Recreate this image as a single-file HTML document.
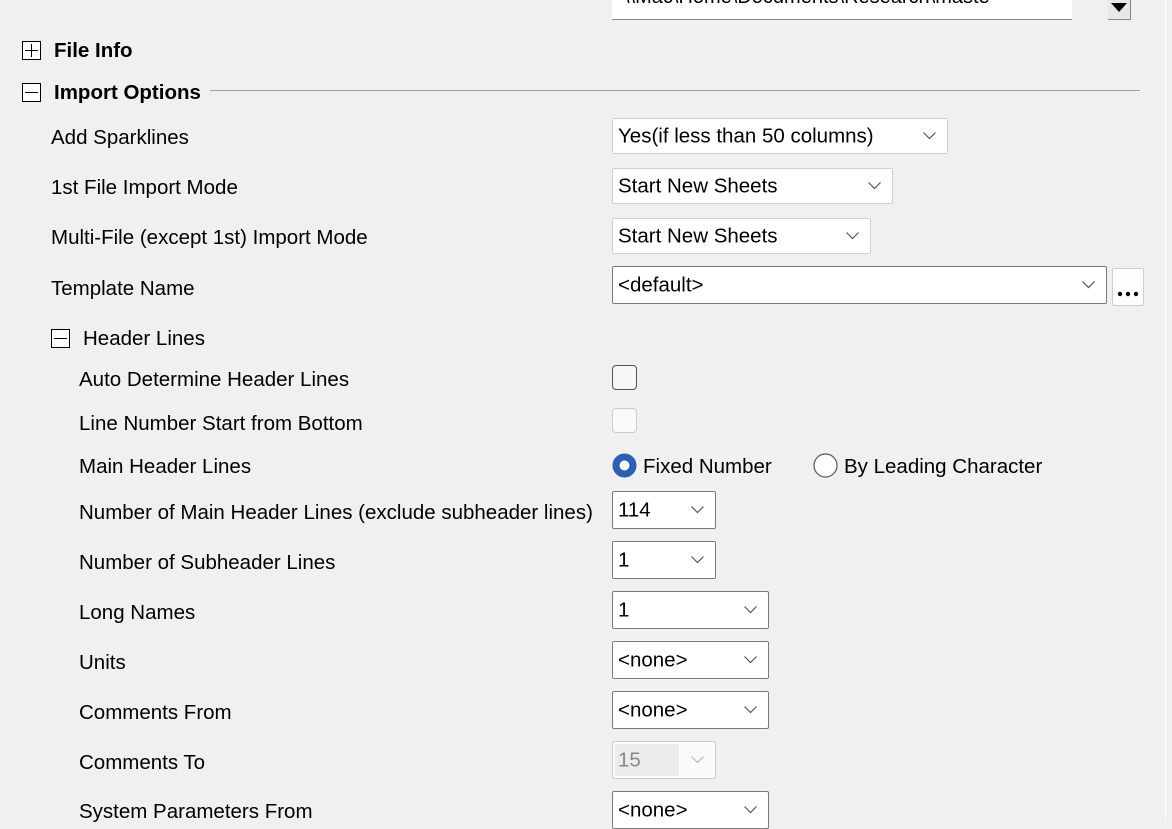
<!DOCTYPE html>
<html><head><meta charset="utf-8"><style>
body{margin:0;width:1172px;height:820px;background:#f0f0f0;overflow:hidden;position:relative;font-family:"Liberation Sans",sans-serif;font-size:20.5px;color:#000}
.l{position:absolute;line-height:24px;white-space:nowrap;margin-top:1px}
.b{font-weight:bold}
.box{position:absolute;background:#fff;border:1px solid #7a7a7a;border-radius:2px;box-sizing:border-box}
.box.lt{border-color:#cfcfcf}
.box span{position:absolute;left:5px;top:50%;transform:translateY(-48%);white-space:nowrap}
.box svg{position:absolute;right:10px;top:50%;margin-top:-4px}
.ico{position:absolute;width:19px;height:19px;border:1px solid #000;box-sizing:border-box;background:#fff}
.ico:before{content:"";position:absolute;left:2px;right:2px;top:8px;height:1px;background:#000}
.ico.p:after{content:"";position:absolute;top:2px;bottom:2px;left:8px;width:1px;background:#000}
.cb{position:absolute;width:25px;height:25px;border:1px solid #555;border-radius:4px;box-sizing:border-box;background:#f7f7f7}
</style></head><body>
<div style="position:absolute;left:612px;top:0;width:460px;height:19px;background:#fff;border-bottom:1px solid #8a8a8a;overflow:hidden"><span class="l" style="left:12px;top:-16px;font-size:20px">\\Mac\Home\Documents\Research\maste</span></div>
<div style="position:absolute;left:1108px;top:0;width:22px;height:19px;background:#e8e8e8;border-right:1px solid #888;border-bottom:1px solid #888"><svg width="22" height="19" style="position:absolute;left:0;top:0"><path d="M3 3h16l-8 9z" fill="#000"/></svg></div>
<div style="position:absolute;left:1165px;top:0;width:1px;height:820px;background:#fff"></div>

<div class="ico p" style="left:22px;top:41px"></div><div class="l b" style="left:54px;top:38px;font-size:20.5px">File Info</div>
<div class="ico" style="left:22px;top:83px"></div><div class="l b" style="left:54px;top:80px;font-size:20.5px">Import Options</div>
<div style="position:absolute;left:210px;top:90px;width:930px;height:1px;background:#a0a0a0"></div>

<div class="l" style="left:51px;top:125px">Add Sparklines</div>
<div class="l" style="left:51px;top:175px">1st File Import Mode</div>
<div class="l" style="left:51px;top:225px">Multi-File (except 1st) Import Mode</div>
<div class="l" style="left:51px;top:276px">Template Name</div>
<div class="ico" style="left:51px;top:329px"></div><div class="l" style="left:83px;top:326px">Header Lines</div>
<div class="l" style="left:79px;top:367px">Auto Determine Header Lines</div>
<div class="l" style="left:79px;top:411px">Line Number Start from Bottom</div>
<div class="l" style="left:79px;top:454px">Main Header Lines</div>
<div class="l" style="left:79px;top:500px">Number of Main Header Lines (exclude subheader lines)</div>
<div class="l" style="left:79px;top:550px">Number of Subheader Lines</div>
<div class="l" style="left:79px;top:600px">Long Names</div>
<div class="l" style="left:79px;top:650px">Units</div>
<div class="l" style="left:79px;top:700px">Comments From</div>
<div class="l" style="left:79px;top:750px">Comments To</div>
<div class="l" style="left:79px;top:799px">System Parameters From</div>

<svg width="0" height="0" style="position:absolute"><defs><path id="ch" d="M0.5 0.5l6 6 6-6" fill="none" stroke="#555" stroke-width="1.2"/></defs></svg>
<div class="box lt" style="left:612px;top:118px;width:336px;height:36px"><span>Yes(if less than 50 columns)</span><svg width="14" height="8"><use href="#ch"/></svg></div>
<div class="box lt" style="left:612px;top:168px;width:281px;height:36px"><span>Start New Sheets</span><svg width="14" height="8"><use href="#ch"/></svg></div>
<div class="box lt" style="left:612px;top:218px;width:259px;height:36px"><span>Start New Sheets</span><svg width="14" height="8"><use href="#ch"/></svg></div>
<div class="box" style="left:612px;top:266px;width:495px;height:38px"><span>&lt;default&gt;</span><svg width="14" height="8"><use href="#ch"/></svg></div>
<div class="box lt" style="left:1112px;top:268px;width:32px;height:38px;background:#fdfdfd"><svg width="22" height="6" style="right:4px;margin-top:4px"><circle cx="3" cy="3" r="2.2"/><circle cx="11" cy="3" r="2.2"/><circle cx="19" cy="3" r="2.2"/></svg></div>

<div class="cb" style="left:612px;top:365px"></div>
<div class="cb" style="left:612px;top:408px;border-color:#ccc;background:#f9f9f9"></div>

<svg style="position:absolute;left:612px;top:453px" width="25" height="25"><circle cx="12.5" cy="12.5" r="12" fill="#2a5fb5"/><circle cx="12.5" cy="12.5" r="5" fill="#fff"/></svg>
<div class="l" style="left:643px;top:454px">Fixed Number</div>
<svg style="position:absolute;left:813px;top:453px" width="25" height="25"><circle cx="12.5" cy="12.5" r="11.5" fill="#fff" stroke="#555" stroke-width="1.2"/></svg>
<div class="l" style="left:844px;top:454px">By Leading Character</div>

<div class="box" style="left:612px;top:491px;width:104px;height:38px"><span>114</span><svg width="14" height="8"><use href="#ch"/></svg></div>
<div class="box" style="left:612px;top:541px;width:104px;height:38px"><span>1</span><svg width="14" height="8"><use href="#ch"/></svg></div>
<div class="box" style="left:612px;top:591px;width:157px;height:38px"><span>1</span><svg width="14" height="8"><use href="#ch"/></svg></div>
<div class="box" style="left:612px;top:641px;width:157px;height:38px"><span>&lt;none&gt;</span><svg width="14" height="8"><use href="#ch"/></svg></div>
<div class="box" style="left:612px;top:691px;width:157px;height:38px"><span>&lt;none&gt;</span><svg width="14" height="8"><use href="#ch"/></svg></div>
<div class="box" style="left:612px;top:741px;width:104px;height:38px;border-color:#ccc;background:#fafafa"><div style="position:absolute;left:2px;top:2px;width:64px;height:32px;background:#ececec"></div><span style="color:#888">15</span><svg width="14" height="8"><path d="M0.5 0.5l6 6 6-6" fill="none" stroke="#bbb" stroke-width="1.2"/></svg></div>
<div class="box" style="left:612px;top:791px;width:157px;height:38px"><span>&lt;none&gt;</span><svg width="14" height="8"><use href="#ch"/></svg></div>
</body></html>
